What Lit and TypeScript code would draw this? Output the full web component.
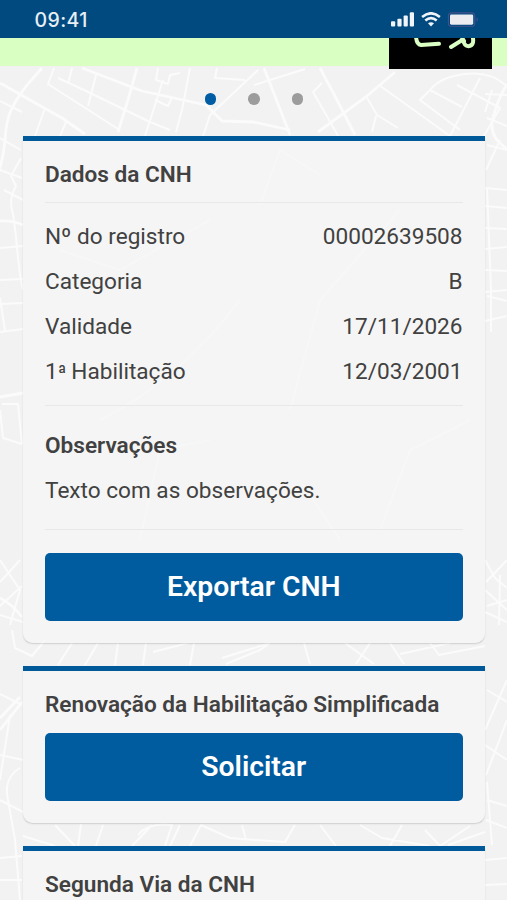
import { LitElement, html, svg, css } from "lit";
import { customElement, property } from "lit/decorators.js";

const MAIN_STREETS = [
  "M42 68C28 84 20 92 11 110Q6 122 5 140C3 165-3 175-6 186",
  "M82 68L142 91 206 105 222 121 254 122 290 130",
  "M264 68L290 135", "M320 68L337 100 355 135", "M395 72L367 96 318 132",
  "M0 83L30 100 62 118 85 134", "M137 68L128 100 118 132",
  "M0 598Q12 604 22 617", "M0 221Q12 220 23 225", "M0 397L23 393",
  "M507 84Q497 100 492 122 490 140 512 152", "M0 730L22 702M0 718L20 697",
];

const STREETS = [
  "M54 68L48 84 118 129", "M-2 100L22 112", "M58 78L84 90 150 122 170 130",
  "M96 75L88 106", "M72 68L68 84", "M158 68L156 80 168 84 170 75 180 73",
  "M190 68L182 110 176 132", "M163 80L145 136", "M155 100L168 106 172 97",
  "M217 68L215 78 245 80", "M258 70L210 115 203 136", "M254 85L305 69",
  "M322 83L313 92 332 125 338 136", "M379 85L450 136", "M366 96L377 115 398 128",
  "M376 116L372 132", "M460 130L420 100 430 90Q440 77 465 74T507 86",
  "M430 90L462 107", "M480 78L450 136", "M457 85L500 108 484 136",
  "M45 108L35 136M66 122L60 136",
  "M0 138L21 150M21 158L11 176 16 186Q8 200 13 214C18 245 17 265 23 290",
  "M0 170L22 178M4 190L23 200", "M0 248L23 246M0 280L23 279M0 304L23 303M0 332L23 329M0 298L5 331",
  "M2 404L18 404 22 444 3 438 0 410", "M0 560L20 590 10 625M0 582L20 560M22 586L0 606",
  "M0 615L23 622M12 630L15 648 32 656 45 640", "M0 694L22 705M0 755L23 760M20 768Q3 778 8 800L15 840 20 900",
  "M10 715L0 780M0 800L23 812M0 858L22 856M0 880L22 880",
  "M23 836L55 846",
  "M507 95L485 94M487 118L507 126M487 145L507 150M486 170L500 140M485 188L507 190M485 206L507 208M485 228L507 229M485 249L507 247M485 270L507 271M485 292L507 290M485 321L507 316",
  "M487 188L491 290 491 332M492 90L485 112M487 296L507 301",
  "M485 560L495 578 507 588M486 582L507 560M487 606L507 600M500 575L499 625M485 612L507 622M485 590L507 610",
  "M485 730L507 680M487 690L507 702M485 745L507 760M486 775L507 720M487 800L507 806M486 820L507 828M487 782L492 845M485 860L507 858M485 885L507 884",
  "M58 665L72 643M85 665L98 643M115 665L118 643M146 643L143 665M153 652L188 643M190 665L194 643M222 658L270 643M226 664L260 650 270 643M304 643L310 664M345 643L374 664M356 664L370 643M390 643L404 664M430 643L439 655 485 646M400 654L450 643",
  "M55 825L75 846M81 824L78 846M103 825L96 846M152 825L132 846M138 835Q148 822 172 825L165 846M180 825L170 846M190 846L201 825 230 838 285 842 295 825M242 825L246 840M320 825L336 846M360 825L382 838 430 846M425 830L440 846 470 826M448 845L485 832M390 846L402 825",
  "M260 205L280 150 320 175M100 420Q180 380 240 300M290 410L320 300 400 210M60 250L120 270 210 220M140 540L160 450 210 440M380 530L410 450 470 420M300 480L340 540",
];

const CNH_ROWS: [string, string][] = [
  ["Nº do registro", "00002639508"],
  ["Categoria", "B"],
  ["Validade", "17/11/2026"],
  ["1ª Habilitação", "12/03/2001"],
];

@customElement("street-map")
class StreetMap extends LitElement {
  static styles = css`
    :host { display: block; }
    .map { display: block; width: 507px; height: 900px; }
    .main, .minor { fill: none; stroke: #fbfbfb; stroke-linejoin: round; }
    .main { stroke-width: 2.8; }
    .minor { stroke-width: 2; }
  `;
  render() {
    return html`<svg class="map" viewBox="0 0 507 900">
      ${STREETS.map((d) => svg`<path class="minor" d=${d} />`)}
      ${MAIN_STREETS.map((d) => svg`<path class="main" d=${d} />`)}
    </svg>`;
  }
}

@customElement("status-bar")
class StatusBar extends LitElement {
  static styles = css`
    :host { display: flex; justify-content: space-between; align-items: center; height: 38px; box-sizing: border-box; padding: 1px 27px 0 34.5px; background: #004a80; color: #e9eff5; }
    .time { font: 500 19.5px/24px Inter, sans-serif; letter-spacing: 0.4px; }
    .icons { display: block; width: 90px; height: 16px; }
  `;
  render() {
    return html`
      <span class="time">09:41</span>
      <svg class="icons" viewBox="390 12 90 16">
        <g fill="#f1f5f9">
          <rect x="391" y="21.2" width="4.2" height="5.3" rx="1" />
          <rect x="397.4" y="18.8" width="4.2" height="7.7" rx="1" />
          <rect x="403.6" y="15.4" width="4.2" height="11.1" rx="1" />
          <rect x="409.8" y="12.3" width="4.2" height="14.2" rx="1" />
          <path d="M428 23.3Q431 21.3 434 23.3L431 26.4Z" />
        </g>
        <g fill="none" stroke="#f1f5f9" stroke-width="2.6">
          <path d="M422.1 16.9Q431 9.7 439.9 16.9" />
          <path d="M425.3 20.4Q431 15.8 436.7 20.4" />
        </g>
        <rect x="448.4" y="12.9" width="26.4" height="13.4" rx="3.4" fill="none" stroke="#45508a" stroke-width="1.1" />
        <rect x="450" y="14.4" width="23.2" height="10.3" rx="1.4" fill="#ececf1" />
        <path d="M476.7 17.3q2.2 2.2 0 4.4z" fill="#54558f" />
      </svg>
    `;
  }
}

@customElement("info-card")
class InfoCard extends LitElement {
  @property() heading = "";
  static styles = css`
    :host { display: flex; flex-direction: column; box-sizing: border-box; border-top: 5.5px solid #005a99; border-radius: 0 0 10px 10px; padding: 20px 22.5px 22.5px 22.5px; background: rgba(246, 246, 246, 0.75); box-shadow: 0 1.5px 1.5px -0.5px rgba(0, 0, 0, 0.15); }
    .heading { font-size: 22.6px; line-height: 28px; font-weight: 600; white-space: nowrap; }
  `;
  render() {
    return html`<div class="heading">${this.heading}</div><slot></slot>`;
  }
}

@customElement("app-root")
class AppRoot extends LitElement {
  static styles = css`
    :host { display: block; position: relative; height: 900px; overflow: hidden; background: #f2f2f2; color: #414141; font-family: Roboto, "Liberation Sans", sans-serif; font-size: 22.6px; line-height: 28px; }
    .backdrop { position: absolute; inset: 0; }
    .screen { position: relative; display: flex; flex-direction: column; }
    .document { display: flex; justify-content: flex-end; align-items: flex-start; height: 28px; padding-right: 15px; background: #d9ffc3; }
    .code { display: block; width: 103px; height: 31px; flex: none; }
    .dots { display: flex; justify-content: center; align-items: center; gap: 32px; height: 69.5px; box-sizing: border-box; padding: 0 0 3.5px 1px; }
    .dot { width: 11.6px; height: 11.6px; border-radius: 50%; background: #9c9c9c; }
    .dot.active { background: #005ca3; }
    .cards { display: flex; flex-direction: column; gap: 23px; padding: 0 22px 0 22.5px; }
    .line { height: 1px; background: #e8e8e8; flex: none; }
    .line.first { margin-top: 13.5px; }
    .rows { display: flex; flex-direction: column; gap: 17px; padding: 20px 0 18.5px; }
    .row { display: flex; justify-content: space-between; }
    .ordinal { font-size: 19px; line-height: 1; letter-spacing: -0.5px; }
    .notes { display: flex; flex-direction: column; gap: 17px; padding: 26.5px 0 24px; }
    .bold { font-weight: 600; }
    .button { display: block; width: 100%; height: 67.5px; padding: 1px 0 0; border: 0; border-radius: 5px; background: #005c9f; color: #fff; font: 600 28.3px/34px Roboto, sans-serif; }
    .export { margin-top: 23px; }
    .request { margin-top: 14px; }
    .last { height: 80px; }
  `;
  private label(text: string) {
    const [before, after] = text.split("ª");
    return after === undefined ? text : html`${before}<span class="ordinal">ª</span>${after}`;
  }
  render() {
    return html`
      <street-map class="backdrop"></street-map>
      <main class="screen">
        <status-bar></status-bar>
        <div class="document">
          <svg class="code" viewBox="0 0 103 31">
            <path d="M0 0H103V31H0Z" fill="#000" />
            <g fill="none" stroke="#daffc4" stroke-width="4" stroke-linecap="round" stroke-linejoin="round">
              <path d="M27-1.5Q27.5 6.5 32 7L50 5.8" />
              <path d="M62 9L74 1.5Q75 8 79.5 8.2Q86 7.5 83.5-2M72-2L75 3" />
            </g>
          </svg>
        </div>
        <nav class="dots"><i class="dot active"></i><i class="dot"></i><i class="dot"></i></nav>
        <section class="cards">
          <info-card heading="Dados da CNH">
            <div class="line first"></div>
            <div class="rows">
              ${CNH_ROWS.map(([name, value]) => html`<div class="row"><span>${this.label(name)}</span><span>${value}</span></div>`)}
            </div>
            <div class="line"></div>
            <div class="notes">
              <div class="bold">Observações</div>
              <div>Texto com as observações.</div>
            </div>
            <div class="line"></div>
            <button class="button export">Exportar CNH</button>
          </info-card>
          <info-card heading="Renovação da Habilitação Simplificada">
            <button class="button request">Solicitar</button>
          </info-card>
          <info-card class="last" heading="Segunda Via da CNH"></info-card>
        </section>
      </main>
    `;
  }
}
